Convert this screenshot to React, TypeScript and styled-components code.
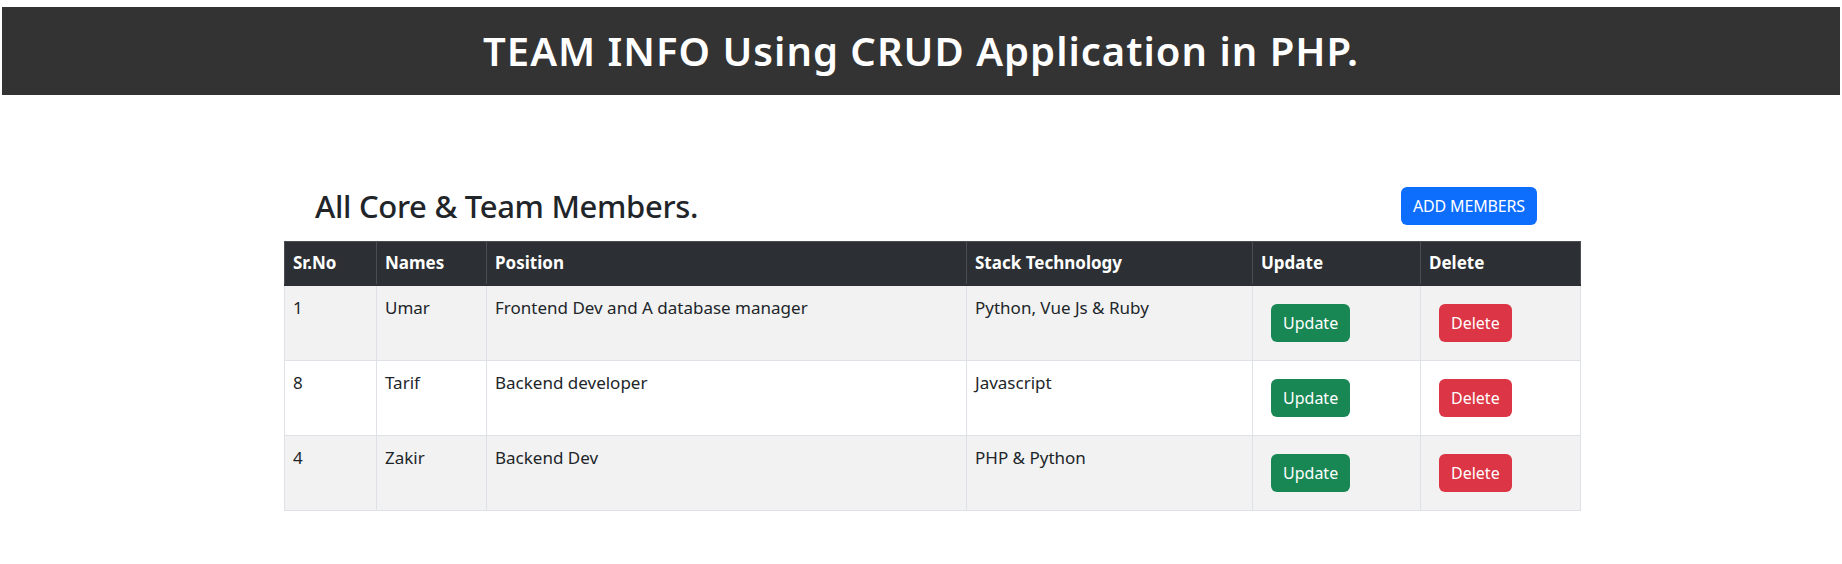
import styled, { createGlobalStyle } from "styled-components";

const GlobalStyle = createGlobalStyle`
  body {
    margin: 0;
    background: #fff;
    color: #212529;
    font-family: "Noto Sans", "Open Sans", "Liberation Sans", sans-serif;
    font-size: 16px;
    line-height: 1.5;
  }
`;

const members = [
  { id: 1, name: "Umar", position: "Frontend Dev and A database manager", stack: "Python, Vue Js & Ruby" },
  { id: 8, name: "Tarif", position: "Backend developer", stack: "Javascript" },
  { id: 4, name: "Zakir", position: "Backend Dev", stack: "PHP & Python" },
];

const columns = [
  { label: "Sr.No", width: 92 },
  { label: "Names", width: 110 },
  { label: "Position", width: 480 },
  { label: "Stack Technology", width: 286 },
  { label: "Update", width: 168 },
  { label: "Delete", width: 160 },
];

const Banner = styled.header`
  margin: 7px 2px 0;
  height: 88px;
  background: #333333;
  display: flex;
  align-items: center;
  justify-content: center;
`;

const BannerTitle = styled.h1`
  margin: 0;
  color: #fff;
  font-size: 40px;
  font-weight: 600;
  letter-spacing: 1px;
  line-height: 1.2;
`;

const Container = styled.main`
  width: 1296px;
  margin: 92px 0 0 284px;
`;

const Toolbar = styled.div`
  display: flex;
  align-items: center;
  justify-content: space-between;
  padding: 0 43px 0 31px;
  margin-bottom: 16px;
`;

const Heading = styled.h2`
  margin: 0;
  font-size: 31px;
  font-weight: 500;
  letter-spacing: -0.3px;
  line-height: 38px;
`;

const Button = styled.button<{ $variant: "primary" | "success" | "danger" }>`
  border: 0;
  border-radius: 6px;
  padding: 7px 12px;
  font-family: inherit;
  font-size: 16px;
  line-height: 24px;
  color: #fff;
  cursor: pointer;
  background: ${(p) =>
    p.$variant === "primary" ? "#0d6efd" : p.$variant === "success" ? "#198754" : "#dc3545"};
`;

const AddButton = styled(Button)`
  letter-spacing: -0.15px;
`;

const RowButton = styled(Button)`
  margin: 10px;
`;

const Table = styled.table`
  width: 1296px;
  table-layout: fixed;
  border-collapse: collapse;
`;

const HeadCell = styled.th`
  background: #2c3034;
  color: #fff;
  font-size: 17px;
  font-weight: 700;
  text-align: left;
  padding: 9px 8px 9px;
  line-height: 24px;
  border: 1px solid #4a4e52;
  border-bottom: 2px solid #2c3034;
`;

const BodyRow = styled.tr<{ $striped: boolean }>`
  background: ${(p) => (p.$striped ? "#f2f2f2" : "#fff")};
`;

const Cell = styled.td`
  padding: 10px 8px 6px;
  vertical-align: top;
  border: 1px solid #dee2e6;
  font-size: 17px;
  line-height: 24px;
`;

const ActionCell = styled(Cell)`
  padding: 8px;
`;

export default function App() {
  return (
    <>
      <GlobalStyle />
      <Banner>
        <BannerTitle>TEAM INFO Using CRUD Application in PHP.</BannerTitle>
      </Banner>
      <Container>
        <Toolbar>
          <Heading>All Core &amp; Team Members.</Heading>
          <AddButton $variant="primary">ADD MEMBERS</AddButton>
        </Toolbar>
        <Table>
          <colgroup>
            {columns.map((c) => (
              <col key={c.label} style={{ width: c.width }} />
            ))}
          </colgroup>
          <thead>
            <tr>
              {columns.map((c) => (
                <HeadCell key={c.label}>{c.label}</HeadCell>
              ))}
            </tr>
          </thead>
          <tbody>
            {members.map((m, i) => (
              <BodyRow key={m.id} $striped={i % 2 === 0}>
                <Cell>{m.id}</Cell>
                <Cell>{m.name}</Cell>
                <Cell>{m.position}</Cell>
                <Cell>{m.stack}</Cell>
                <ActionCell>
                  <RowButton $variant="success">Update</RowButton>
                </ActionCell>
                <ActionCell>
                  <RowButton $variant="danger">Delete</RowButton>
                </ActionCell>
              </BodyRow>
            ))}
          </tbody>
        </Table>
      </Container>
    </>
  );
}
